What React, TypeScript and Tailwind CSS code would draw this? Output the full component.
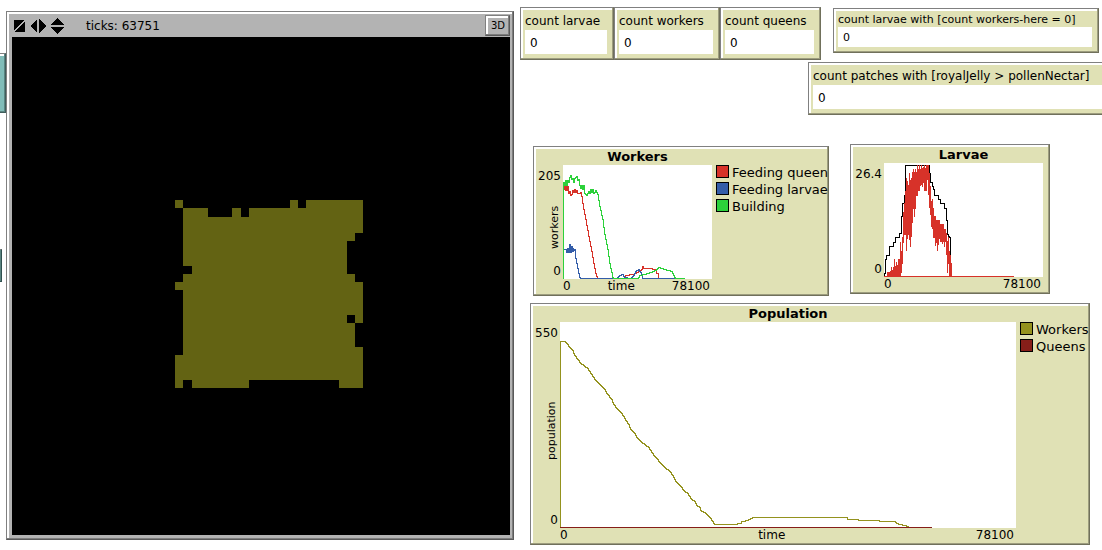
import React, { useId } from 'react';

type Point = [number, number];

interface Series {
  color: string;
  points: Point[];
}

interface LegendEntry {
  label: string;
  swatch: string;
}

const BEVEL =
  'border border-t-[#808080] border-l-[#808080] border-r-[#70705b] border-b-[#70705b] bg-[#e0e1b5] pt-[2px] pl-[2px] pr-px pb-px shadow-[inset_-1px_-1px_0_#9d9d7f,inset_2px_2px_0_#fff]';
const GRAY_BEVEL =
  'border border-t-[#808080] border-l-[#808080] border-r-[#595959] border-b-[#595959] bg-[#b3b3b3] pt-[2px] pl-[2px] pr-px pb-px shadow-[inset_-1px_-1px_0_#7d7d7d,inset_2px_2px_0_#fff]';

// Filled patches: [row, first column, last column]
const WORLD_SIZE = 61;
const PATCH_RUNS: [number, number, number][] = [
  [20, 20, 20], [20, 34, 34], [20, 36, 42],
  [21, 21, 23], [21, 27, 27], [21, 29, 42],
  [22, 21, 42],
  [23, 21, 42],
  [24, 21, 41],
  [25, 21, 40],
  [26, 21, 40],
  [27, 21, 40],
  [28, 22, 40],
  [29, 21, 41],
  [30, 20, 42],
  [31, 21, 42],
  [32, 21, 42],
  [33, 21, 42],
  [34, 21, 40], [34, 42, 42],
  [35, 21, 41],
  [36, 21, 41],
  [37, 21, 41],
  [38, 21, 42],
  [39, 20, 42],
  [40, 20, 42],
  [41, 20, 42],
  [42, 20, 20], [42, 22, 28], [42, 40, 42],
];

const WORKER_SERIES: Series[] = [
  {
    color: '#d73229',
    points: [
      [0, 22], [1, 24], [1, 20], [2, 25], [3, 20], [4, 25], [4, 21], [5, 28], [6, 26], [7, 30],
      [8, 29], [9, 25], [10, 27], [11, 24], [12, 27], [13, 25], [14, 28],
      [16, 28], [17, 27], [18, 31], [20, 44], [22, 54], [24, 65], [26, 76], [28, 86], [30, 98],
      [32, 108], [34, 113], [60, 113], [62, 110], [68, 109], [72, 108], [76, 105], [78, 104],
      [79, 101], [80, 103], [85, 103], [92, 104], [93, 108], [95, 108], [95, 113],
    ],
  },
  {
    color: '#345da9',
    points: [
      [1, 84], [3, 83], [3, 87], [4, 83], [5, 87], [6, 83], [6, 79], [7, 87], [8, 81], [9, 86],
      [10, 82], [10, 85], [11, 84], [12, 93], [14, 103], [16, 112], [17, 113], [53, 113],
      [56, 110], [59, 109], [61, 112], [67, 113], [70, 110], [72, 106], [75, 104], [77, 107],
      [79, 113], [112, 113],
    ],
  },
  {
    color: '#2cd13b',
    points: [
      [0, 113], [0, 17], [1, 20], [2, 15], [3, 20], [4, 15], [5, 17], [6, 12], [7, 10], [8, 14],
      [9, 13], [10, 17], [11, 13], [13, 11], [14, 15], [15, 14], [16, 20], [17, 23], [18, 20],
      [19, 24], [20, 20], [21, 28], [23, 30], [25, 26], [26, 28], [27, 24], [28, 27], [29, 24],
      [30, 28], [32, 25], [34, 29], [36, 41], [39, 54], [41, 69], [44, 84], [46, 98], [49, 112],
      [50, 113], [74, 113], [76, 110], [84, 108], [92, 105], [95, 102], [101, 104], [108, 106],
      [111, 112], [113, 113], [121, 113],
    ],
  },
];

const LARVAE_MAX: Point[] = [
  [0, 113], [0, 110], [1, 110], [1, 96], [2, 96], [2, 92], [5, 92], [5, 83], [9, 83], [9, 79],
  [11, 79], [11, 74], [15, 74], [15, 70], [17, 70], [17, 53], [18, 53], [18, 40], [20, 40],
  [20, 32], [21, 32], [21, 2], [45, 2], [45, 10], [46, 10], [46, 19], [48, 19], [48, 23],
  [50, 28], [50, 32], [54, 32], [54, 36], [56, 36], [56, 40], [60, 40], [60, 45], [62, 45],
  [62, 57], [63, 57], [63, 71], [65, 74], [66, 95],
];

// Vertical extent of the noisy larvae pen: [x, top, bottom]
const LARVAE_SPREAD: [number, number, number][] = [
  [3, 109, 114], [4, 109, 114], [5, 109, 114], [6, 108, 114], [7, 104, 114], [8, 107, 114],
  [9, 104, 114], [10, 96, 114], [11, 103, 114], [12, 99, 114], [13, 102, 114], [14, 96, 114],
  [15, 96, 114], [16, 79, 114], [17, 88, 110], [18, 74, 101], [19, 49, 80], [20, 40, 72],
  [21, 28, 72], [22, 15, 88], [23, 18, 76], [24, 22, 72], [25, 10, 77], [26, 17, 84],
  [27, 15, 74], [28, 9, 60], [29, 6, 46], [30, 9, 54], [31, 6, 46], [32, 9, 33],
  [33, 2, 33], [34, 6, 28], [35, 2, 28], [36, 6, 23], [37, 2, 22], [38, 5, 24],
  [39, 4, 20], [40, 2, 28], [41, 5, 28], [42, 2, 28], [43, 2, 17], [44, 2, 32],
  [45, 10, 45], [46, 23, 52], [47, 38, 64], [48, 36, 66], [49, 45, 75], [50, 53, 75],
  [51, 53, 83], [52, 57, 80], [53, 57, 88], [54, 57, 82], [55, 57, 76], [56, 61, 79],
  [57, 61, 79], [58, 61, 81], [59, 61, 79], [60, 66, 84], [61, 66, 79], [62, 70, 92],
  [63, 78, 110], [64, 74, 101], [65, 88, 114], [66, 92, 114], [67, 100, 114],
];

const POPULATION_SERIES: Series[] = [
  {
    color: '#94921e',
    points: [
      [0, 205], [0, 19], [4, 19], [6, 21], [9, 25], [12, 28], [14, 33], [18, 38], [20, 41],
      [27, 46], [31, 52], [34, 57], [39, 62], [44, 67], [46, 71], [51, 77], [53, 82], [57, 87],
      [61, 91], [64, 96], [68, 102], [70, 107], [74, 111], [76, 115], [80, 119], [88, 125],
      [91, 130], [95, 135], [100, 141], [104, 145], [109, 149], [112, 153], [115, 159],
      [120, 164], [123, 168], [127, 171], [130, 176], [134, 179], [136, 183], [140, 185],
      [140, 188], [145, 191], [150, 196], [154, 202], [173, 202], [180, 201], [181, 199],
      [187, 198], [192, 195], [286, 195], [287, 197], [297, 197], [298, 198], [318, 198],
      [319, 199], [334, 199], [338, 202], [345, 203], [349, 205],
    ],
  },
  { color: '#861e19', points: [[0, 205], [371, 205]] },
];

// Joins the points with one-unit stairs, the way the plot pen moves
function staircase(points: Point[]) {
  const [startX, startY] = points[0];
  let d = `M${startX + 0.5} ${startY + 0.5}`;
  for (let i = 1; i < points.length; i++) {
    const [x0, y0] = points[i - 1];
    const [x1, y1] = points[i];
    for (let x = x0 + 1; x <= x1; x++) {
      const y = Math.round(y0 + ((y1 - y0) * (x - x0)) / (x1 - x0));
      d += `H${x + 0.5}V${y + 0.5}`;
    }
    d += `V${y1 + 0.5}`;
  }
  return d;
}

function Line({ color, points }: Series) {
  return (
    <path
      d={staircase(points)}
      fill="none"
      stroke={color}
      strokeWidth="1"
      strokeLinecap="square"
      vectorEffect="non-scaling-stroke"
    />
  );
}

interface MonitorProps {
  label: string;
  value: number;
  className?: string;
  small?: boolean;
}

function Monitor({ label, value, className = '', small = false }: MonitorProps) {
  const id = useId();
  return (
    <div className={`${BEVEL} ${className} min-w-0 ${small ? 'text-[11px]' : 'text-xs'}`}>
      <label
        htmlFor={id}
        className={`block whitespace-nowrap pl-[2px] ${small ? 'h-4 leading-[18px]' : 'h-5 leading-[22px]'}`}
      >
        {label}
      </label>
      <output
        id={id}
        className={`mr-[5px] mb-1 ml-[2px] block bg-white pl-[5px] ${small ? 'h-5 leading-[22px]' : 'h-6 leading-[26px]'}`}
      >
        {value}
      </output>
    </div>
  );
}

interface PlotPanelProps {
  title: string;
  yMax: string;
  yLabel?: string;
  xLabel?: string;
  legend?: LegendEntry[];
  columns: string;
  className?: string;
  children: React.ReactNode;
}

function PlotPanel({ title, yMax, yLabel, xLabel, legend = [], columns, className = '', children }: PlotPanelProps) {
  return (
    <section className={`${BEVEL} ${className} min-w-0 text-[13px]`}>
      <div className={`grid ${columns}`}>
        <h2 className="col-start-2 h-4 text-center font-bold leading-4">{title}</h2>

        {/* Y axis */}
        <div className="col-start-1 row-start-2 flex flex-col items-end pt-[3px] pr-[2px] text-xs leading-4">
          <span>{yMax}</span>
          <span className="flex flex-1 rotate-180 justify-center pb-2 text-[11px] leading-3 [writing-mode:vertical-rl]">
            {yLabel}
          </span>
          <span>0</span>
        </div>

        <div className="col-start-2 row-start-2 min-w-0 bg-white">{children}</div>

        <ul className="col-start-3 row-start-2 flex flex-col gap-[2px] pl-1">
          {legend.map((entry) => (
            <li key={entry.label} className="flex gap-[3px] whitespace-nowrap leading-[15px]">
              <span className={`h-[13px] w-[13px] shrink-0 border border-black ${entry.swatch}`} />
              {entry.label}
            </li>
          ))}
        </ul>

        {/* X axis */}
        <div className="col-start-2 row-start-3 flex h-[15px] justify-between pr-[2px] text-xs leading-[15px]">
          <span>0</span>
          <span>{xLabel}</span>
          <span>78100</span>
        </div>
      </div>
    </section>
  );
}

function WorldView() {
  return (
    <section className={`${GRAY_BEVEL} mt-[11px] min-w-0`}>
      <header className="flex h-[23px] items-center pl-[5px]">
        <button type="button" aria-label="Resize">
          <svg width="11" height="12" viewBox="0 0 11 12" shapeRendering="crispEdges" className="block">
            <path d="M0 0H11V12H0Z" />
            <path d="M0 11L11 1" stroke="#b3b3b3" strokeWidth="1.5" />
          </svg>
        </button>
        <button type="button" aria-label="Width" className="ml-[5px]">
          <svg width="16" height="14" viewBox="0 0 16 14" shapeRendering="crispEdges" className="block">
            <path d="M7 0V14L0 7ZM9 0V14L16 7Z" />
          </svg>
        </button>
        <button type="button" aria-label="Height" className="ml-[5px]">
          <svg width="13" height="16" viewBox="0 0 13 16" shapeRendering="crispEdges" className="block">
            <path d="M0 7H13L6.500 0ZM0 9H13L6.500 16Z" />
          </svg>
        </button>
        <span className="ml-[22px] text-xs">ticks: 63751</span>
        <button type="button" className={`${GRAY_BEVEL} mr-[2px] ml-auto h-[21px] w-[25px] text-[10px] leading-4`}>
          3D
        </button>
      </header>
      <div className="pr-[2px] pb-[3px] pl-[3px]">
        <svg
          viewBox={`0 0 ${WORLD_SIZE} ${WORLD_SIZE}`}
          shapeRendering="crispEdges"
          className="block aspect-square w-full bg-black"
        >
          {PATCH_RUNS.map(([row, first, last]) => (
            <rect key={`${row}-${first}`} x={first} y={row} width={last - first + 1} height="1" fill="#636313" />
          ))}
        </svg>
      </div>
    </section>
  );
}

export default function App() {
  return (
    <main className="grid grid-cols-[6px_minmax(0,508fr)_minmax(0,588fr)] items-start overflow-hidden bg-white font-['DejaVu_Sans',sans-serif] text-black">
      {/* Edge of the button column */}
      <div className="pt-[53px]">
        <div className="h-[60px] border-t border-r border-b border-t-[#808080] border-r-[#405e5c] border-b-[#405e5c] bg-[#81bdb9] shadow-[inset_-1px_-1px_0_#5a8481,inset_0_2px_0_#fff]" />
        <div className="mt-[136px] h-[33px] w-[2px] border-t border-r border-b border-t-[#808080] border-r-[#30504f] border-b-[#30504f] bg-[#5a8481]" />
      </div>

      <WorldView />

      <div className="min-w-0 pt-[7px] pl-[6px]">
        <div className="grid grid-cols-[minmax(0,94fr)_minmax(0,106fr)_minmax(0,101fr)_minmax(0,278fr)] items-start pr-[3px]">
          <Monitor label="count larvae" value={0} />
          <Monitor label="count workers" value={0} />
          <Monitor label="count queens" value={0} />
          <Monitor label="count larvae with [count workers-here = 0]" value={0} small className="mt-px ml-3" />
        </div>
        <Monitor
          label="count patches with [royalJelly > pollenNectar]"
          value={0}
          className="mt-[2px] -mr-4 ml-[288px]"
        />

        <div className="mt-[29px] grid grid-cols-[minmax(0,296fr)_minmax(0,200fr)] items-start gap-[21px] pr-[52px] pl-[13px]">
          <PlotPanel
            title="Workers"
            yMax="205"
            yLabel="workers"
            xLabel="time"
            columns="grid-cols-[27px_1fr_115px]"
            className="mt-[2px]"
            legend={[
              { label: 'Feeding queen', swatch: 'bg-[#d73229]' },
              { label: 'Feeding larvae', swatch: 'bg-[#345da9]' },
              { label: 'Building', swatch: 'bg-[#2cd13b]' },
            ]}
          >
            <svg viewBox="0 0 149 114" preserveAspectRatio="none" shapeRendering="crispEdges" className="block h-[114px] w-full">
              {WORKER_SERIES.map((series) => (
                <Line key={series.color} {...series} />
              ))}
            </svg>
          </PlotPanel>

          <PlotPanel title="Larvae" yMax="26.4" columns="grid-cols-[31px_1fr_5px]">
            <svg viewBox="0 0 159 114" preserveAspectRatio="none" shapeRendering="crispEdges" className="block h-[114px] w-full">
              <Line color="#000000" points={LARVAE_MAX} />
              {LARVAE_SPREAD.map(([x, top, bottom]) => (
                <rect key={x} x={x} y={top} width="1" height={bottom - top} fill="#d73229" />
              ))}
              <Line color="#d73229" points={[[0, 113], [129, 113]]} />
            </svg>
          </PlotPanel>
        </div>

        <div className="mt-[7px] pr-3 pl-[10px]">
          <PlotPanel
            title="Population"
            yMax="550"
            yLabel="population"
            xLabel="time"
            columns="grid-cols-[27px_1fr_72px]"
            legend={[
              { label: 'Workers', swatch: 'bg-[#94921e]' },
              { label: 'Queens', swatch: 'bg-[#861e19]' },
            ]}
          >
            <svg viewBox="0 0 456 206" preserveAspectRatio="none" shapeRendering="crispEdges" className="block h-[206px] w-full">
              {POPULATION_SERIES.map((series) => (
                <Line key={series.color} {...series} />
              ))}
            </svg>
          </PlotPanel>
        </div>
      </div>
    </main>
  );
}
